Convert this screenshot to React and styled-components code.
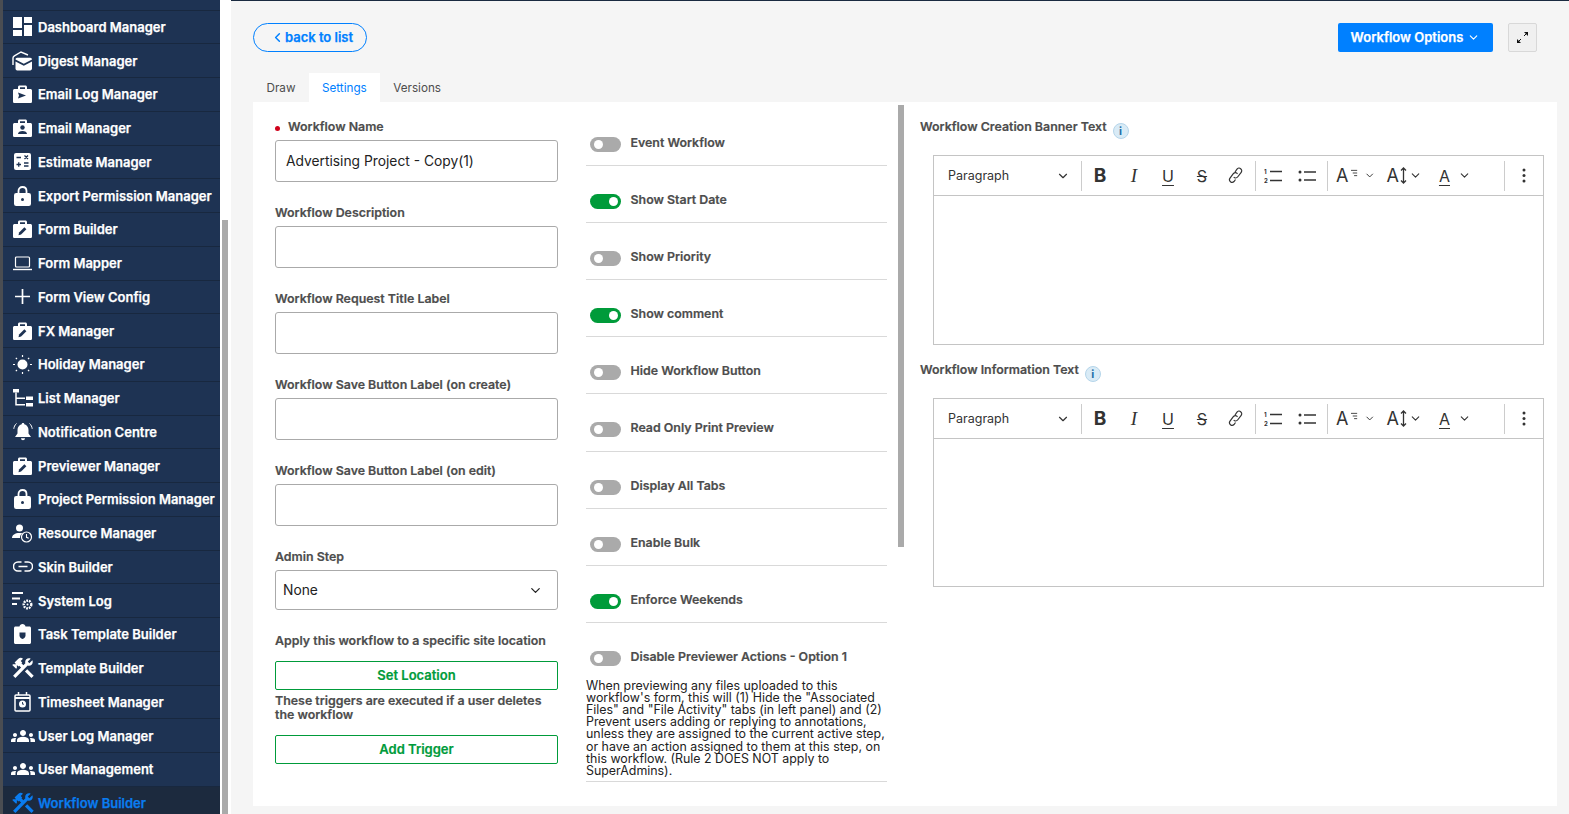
import React from 'react';
import styled, { createGlobalStyle } from 'styled-components';
import { MdConstruction, MdGroups } from 'react-icons/md';
import { FiChevronDown, FiChevronLeft } from 'react-icons/fi';

const NAVY = '#1e3353';

const GlobalStyle = createGlobalStyle`
  html, body {
    margin: 0;
    height: 100%;
    overflow: hidden;
    background: #f5f5f5;
  }
  body {
    font-family: Inter, 'Liberation Sans', sans-serif;
  }
  * {
    box-sizing: border-box;
  }
`;

const Page = styled.div`
  display: flex;
  width: 1569px;
  height: 814px;
  overflow: hidden;
`;

const Sidebar = styled.nav`
  width: 220px;
  flex: none;
  height: 814px;
  background: ${NAVY};
  border-left: 3px solid #4a4d52;
  overflow: hidden;
`;

const Sliver = styled.div`
  height: 10.5px;
  border-bottom: 1px solid #18283f;
`;

const Row = styled.div`
  display: flex;
  align-items: center;
  gap: 6px;
  height: 33.75px;
  padding-left: 10px;
  border-bottom: 1px solid #18283f;
  color: ${(p) => (p.$active ? '#0a7cf0' : '#fff')};
  background: ${(p) => (p.$active ? '#1c2a3e' : 'transparent')};
  box-shadow: ${(p) => (p.$active ? '-3px 0 0 #0a7cf0' : 'none')};
  font-size: 13px;
  font-weight: 600;
  -webkit-text-stroke: 0.25px currentColor;
  white-space: nowrap;
`;

const IconBox = styled.span`
  display: flex;
  width: 19px;
  height: 20px;
  flex: none;
  align-items: center;
  justify-content: center;
  svg {
    display: block;
    flex: none;
  }
`;

const SideRail = styled.div`
  width: 11px;
  flex: none;
  background: #fff;
  padding: 220px 2px 0;
`;

const RailThumb = styled.div`
  width: 6px;
  height: 594px;
  background: #aaa;
`;

const Main = styled.main`
  flex: 1;
  min-width: 0;
  height: 806px;
  padding: 0 12px 0 22px;
  display: flex;
  flex-direction: column;
`;

const Header = styled.header`
  display: flex;
  align-items: flex-start;
  height: 73px;
  margin: 0 -12px 0 -22px;
  padding: 22px 32px 0 22px;
  border-top: 1px solid #1a2a40;
`;

const BackButton = styled.button`
  display: flex;
  align-items: center;
  justify-content: center;
  width: 114px;
  height: 29px;
  padding: 0 0 1px 3px;
  border: 1px solid #0080ff;
  border-radius: 15px;
  background: transparent;
  color: #0080ff;
  font: 600 13px Inter, sans-serif;
  -webkit-text-stroke: 0.25px currentColor;
`;

const OptionsButton = styled.button`
  display: flex;
  align-items: center;
  justify-content: center;
  gap: 4px;
  width: 155px;
  height: 29px;
  margin-left: auto;
  padding: 0 0 1px;
  border: 0;
  border-radius: 2px;
  background: #0080ff;
  color: #fff;
  font: 600 13px Inter, sans-serif;
  -webkit-text-stroke: 0.25px currentColor;
`;

const ExpandButton = styled.button`
  display: flex;
  align-items: center;
  justify-content: center;
  width: 29px;
  height: 29px;
  margin-left: 15px;
  padding: 0;
  border: 1px solid #d8d8d8;
  border-radius: 2px;
  background: #f0f0f0;
`;

const Tabs = styled.div`
  display: flex;
  height: 29px;
`;

const Tab = styled.div`
  display: flex;
  align-items: center;
  padding: 0 ${(p) => (p.$active ? '13px' : '13.5px')};
  background: ${(p) => (p.$active ? '#fff' : 'transparent')};
  color: ${(p) => (p.$active ? '#0080ff' : '#4d4d4d')};
  font-size: 11.7px;
`;

const Panel = styled.section`
  flex: 1;
  display: flex;
  background: #fff;
  padding-left: 22px;
`;

const FormCol = styled.div`
  width: 283px;
  flex: none;
  padding-top: 17px;
`;

const Field = styled.div`
  margin-bottom: ${(p) => p.$mb ?? 23}px;
`;

const Label = styled.div`
  display: flex;
  align-items: center;
  height: 15px;
  margin-bottom: 6px;
  padding-top: 1px;
  color: #4d4d4d;
  font-size: 12.4px;
  font-weight: 600;
  -webkit-text-stroke: 0.2px currentColor;
  line-height: 14px;
  white-space: nowrap;
`;

const RequiredDot = styled.span`
  width: 5px;
  height: 5px;
  margin: 2px 8px 0 0;
  border-radius: 50%;
  background: #d0021b;
`;

const TextBox = styled.div`
  display: flex;
  align-items: center;
  justify-content: space-between;
  height: ${(p) => p.$h ?? 42}px;
  padding: 0 ${(p) => (p.$select ? '14px' : '11px')} 0 ${(p) => (p.$select ? '7px' : '10px')};
  border: 1px solid #aaa;
  border-radius: 3px;
  color: #222;
  font-size: 13.8px;
  line-height: 38px;
`;

const Hint = styled.div`
  height: 14px;
  margin-bottom: 13px;
  color: #4d4d4d;
  font-size: 12.4px;
  font-weight: 600;
  -webkit-text-stroke: 0.2px currentColor;
  line-height: 14px;
  white-space: nowrap;
`;

const GreenButton = styled.button`
  display: block;
  width: 100%;
  height: 29px;
  padding: 0 0 1px;
  border: 1px solid #009b3a;
  border-radius: 2px;
  background: #fff;
  color: #009b3a;
  font: 600 13px Inter, sans-serif;
  -webkit-text-stroke: 0.2px currentColor;
`;

const TriggerNote = styled.div`
  margin: 4px 0 13px;
  color: #4d4d4d;
  font-size: 12.4px;
  font-weight: 600;
  -webkit-text-stroke: 0.2px currentColor;
  line-height: 14px;
`;

const ToggleCol = styled.div`
  width: 301px;
  flex: none;
  margin-left: 28px;
  padding-top: 7px;
`;

const ToggleRow = styled.div`
  height: 57.1px;
  padding-top: 27px;
  border-bottom: 1px solid #d9d9d9;
`;

const LastRow = styled.div`
  padding-top: 27px;
  padding-bottom: 4px;
  border-bottom: 1px solid #d9d9d9;
`;

const ToggleLine = styled.div`
  display: flex;
  align-items: flex-start;
  padding-left: 4px;
  color: #4d4d4d;
  font-size: 12.4px;
  font-weight: 600;
  -webkit-text-stroke: 0.2px currentColor;
  line-height: 14px;
`;

const Track = styled.span`
  position: relative;
  width: 31px;
  height: 15px;
  flex: none;
  margin: 1px 9.5px 0 0;
  border-radius: 8px;
  background: ${(p) => (p.$on ? '#009b3a' : '#aaa')};
  &::after {
    content: '';
    position: absolute;
    top: 3px;
    left: ${(p) => (p.$on ? '19px' : '4px')};
    width: 9px;
    height: 9px;
    border-radius: 50%;
    background: #fff;
  }
`;

const Description = styled.div`
  margin-top: 14px;
  color: #222;
  font-size: 12.4px;
  line-height: 12.15px;
`;

const PanelThumb = styled.div`
  width: 6px;
  height: 442px;
  flex: none;
  margin: 3px 0 0 11px;
  background: #aaa;
`;

const EditorCol = styled.div`
  flex: 1;
  padding: 17px 0 0 16px;
`;

const EditorLabel = styled.div`
  display: flex;
  align-items: flex-start;
  height: 15px;
  margin-bottom: 21px;
  padding-top: 1px;
  color: #4d4d4d;
  font-size: 12.4px;
  font-weight: 600;
  -webkit-text-stroke: 0.2px currentColor;
  line-height: 14px;
`;

const InfoIcon = styled.span`
  display: flex;
  align-items: center;
  justify-content: center;
  width: 16px;
  height: 16px;
  margin: 3px 0 0 6px;
  border: 1px solid #b5d5ea;
  border-radius: 50%;
  background: #d9ebf6;
  color: #1d6fa8;
  font: 700 11px Inter, sans-serif;
  -webkit-text-stroke: 0;
`;

const Editor = styled.div`
  margin: 0 0 17px 13px;
  width: 611px;
  height: ${(p) => p.$h}px;
  border: 1px solid #c4c4c4;
  display: flex;
  flex-direction: column;
`;

const Toolbar = styled.div`
  display: flex;
  align-items: center;
  height: 40px;
  flex: none;
  border-bottom: 1px solid #c4c4c4;
  color: #333;
`;

const ParagraphPicker = styled.div`
  display: flex;
  align-items: center;
  justify-content: space-between;
  width: 147px;
  padding: 0 11px 0 14px;
  color: #333;
  font-size: 12.5px;
`;

const Sep = styled.span`
  width: 1px;
  height: 30px;
  flex: none;
  background: #ccc;
  margin-left: ${(p) => p.$ml ?? 0}px;
  margin-right: ${(p) => p.$mr ?? 0}px;
`;

const Tool = styled.span`
  display: flex;
  align-items: center;
  justify-content: center;
  width: ${(p) => p.$w ?? 34}px;
  height: 24px;
  flex: none;
  color: #333;
`;

const Glyph = styled.span`
  font-family: ${(p) => (p.$serif ? "'Liberation Serif', serif" : 'Inter, sans-serif')};
  font-size: ${(p) => p.$size ?? 17}px;
  font-weight: ${(p) => (p.$bold ? 700 : 400)};
  font-style: ${(p) => (p.$italic ? 'italic' : 'normal')};
  text-decoration: ${(p) => p.$line ?? 'none'};
  text-decoration-thickness: 1px;
  text-underline-offset: 3px;
`;

const DropTool = styled.span`
  display: flex;
  align-items: center;
  justify-content: flex-end;
  width: ${(p) => p.$w}px;
  gap: ${(p) => p.$gap ?? 4}px;
  flex: none;
  color: #333;
`;

const Spacer = styled.span`
  flex: 1;
`;

const FontLines = styled.svg`
  margin: 0 0 6px -3px;
`;

const LineArrows = styled.svg`
  margin-right: 1px;
`;

const icons = {
  dashboard: (
    <svg width="19" height="19" viewBox="0 0 19 19" fill="currentColor">
      <rect x="0" y="0" width="9" height="11" />
      <rect x="11" y="0" width="8" height="6" />
      <rect x="0" y="13" width="9" height="6" />
      <rect x="11" y="8" width="8" height="11" />
    </svg>
  ),
  digest: (
    <svg width="21" height="20" viewBox="0 0 21 20">
      <path d="M1 14V7c0-1 .5-1.600 1.400-2.200L9 1l7 3" fill="none" stroke="currentColor" strokeWidth="1.400" />
      <path d="M3.500 8.500c0-1 .7-1.700 1.700-1.700h13c1 0 1.800.7 1.800 1.700l-8.200 4.300-8.300-4.300zM3.500 10.600l8.300 4.200 8.200-4.200v7c0 1-.8 1.800-1.800 1.800h-13c-1 0-1.700-.8-1.700-1.800z" fill="currentColor" />
    </svg>
  ),
  send: (
    <svg width="19" height="18" viewBox="0 0 19 18">
      <path d="M5 4V2c0-1 .7-1.600 1.600-1.600h5.800c.9 0 1.600.6 1.600 1.600v2h3.400c.9 0 1.600.7 1.600 1.600v10.800c0 .9-.7 1.600-1.600 1.600H1.600c-.9 0-1.600-.7-1.600-1.600V5.600C0 4.700.7 4 1.600 4zM7 2.200V4h5V2.200z" fill="currentColor" fillRule="evenodd" />
      <path d="M5 7.500l8 3-8 3 1-3z" fill={NAVY} />
    </svg>
  ),
  person: (
    <svg width="19" height="18" viewBox="0 0 19 18">
      <path d="M5 4V2c0-1 .7-1.600 1.600-1.600h5.800c.9 0 1.600.6 1.600 1.600v2h3.400c.9 0 1.600.7 1.600 1.600v10.800c0 .9-.7 1.600-1.600 1.600H1.600c-.9 0-1.600-.7-1.600-1.600V5.600C0 4.700.7 4 1.600 4zM7 2.200V4h5V2.200z" fill="currentColor" fillRule="evenodd" />
      <circle cx="9.500" cy="8.500" r="2.200" fill={NAVY} />
      <path d="M5 15c0-2 2-3 4.500-3s4.500 1 4.500 3z" fill={NAVY} />
    </svg>
  ),
  calc: (
    <svg width="17" height="17" viewBox="0 0 17 17">
      <rect width="17" height="17" rx="2" fill="currentColor" />
      <path d="M2.500 4.500h4.500M2.500 11.500h4.500M4.750 9.300v4.400M10 10h4.500M10 13h4.500M10.500 2.500l3.500 3.500M14 2.500l-3.500 3.500" stroke={NAVY} strokeWidth="1.300" fill="none" />
    </svg>
  ),
  lock: (
    <svg width="17" height="20" viewBox="0 0 17 20">
      <path d="M4.500 8V5c0-2.400 1.700-4 4-4s4 1.600 4 4v3" fill="none" stroke="currentColor" strokeWidth="1.800" />
      <rect y="7" width="17" height="13" rx="2.200" fill="currentColor" />
      <circle cx="8.500" cy="13.500" r="1.500" fill={NAVY} />
    </svg>
  ),
  edit: (
    <svg width="19" height="18" viewBox="0 0 19 18">
      <path d="M5 4V2c0-1 .7-1.600 1.600-1.600h5.800c.9 0 1.600.6 1.600 1.600v2h3.400c.9 0 1.600.7 1.600 1.600v10.800c0 .9-.7 1.600-1.600 1.600H1.600c-.9 0-1.600-.7-1.600-1.600V5.600C0 4.700.7 4 1.600 4zM7 2.200V4h5V2.200z" fill="currentColor" fillRule="evenodd" />
      <path d="M5.500 15.200l.6-2.600 5.300-5.300 2 2-5.300 5.300z" fill={NAVY} />
    </svg>
  ),
  laptop: (
    <svg width="19" height="15" viewBox="0 0 19 15" fill="none" stroke="currentColor">
      <rect x="2.500" y="1" width="14" height="10" rx="1" strokeWidth="1.200" />
      <path d="M0 13.500h19" strokeWidth="1.400" />
    </svg>
  ),
  plus: (
    <svg width="15" height="15" viewBox="0 0 15 15" stroke="currentColor" strokeWidth="1.700">
      <path d="M7.500 0v15M0 7.500h15" />
    </svg>
  ),
  sun: (
    <svg width="19" height="19" viewBox="0 0 19 19" fill="currentColor">
      <circle cx="9.500" cy="9.500" r="5" />
      <path d="M9.500 0v2M9.500 17v2M0 9.500h2M17 9.500h2M2.800 2.800l1.200 1.200M15 15l1.200 1.200M2.800 16.200L4 15M15 4l1.200-1.200" stroke="currentColor" strokeWidth="1.200" />
    </svg>
  ),
  tree: (
    <svg width="20" height="18" viewBox="0 0 20 18" fill="currentColor">
      <rect x="0" y="0" width="6" height="3.500" />
      <rect x="13" y="7.500" width="7" height="3.500" />
      <rect x="13" y="14" width="7" height="3.500" />
      <path d="M3 3.500V15.800h9M3 9.300h9" fill="none" stroke="currentColor" strokeWidth="1.500" />
    </svg>
  ),
  bell: (
    <svg width="20" height="20" viewBox="0 0 20 20" fill="currentColor">
      <path d="M10 1c.8 0 1.300.5 1.300 1.200C14 3 15.500 5.300 15.500 8v3.500l2.500 3.500H2l2.500-3.500V8c0-2.700 1.500-5 4.200-5.800C8.700 1.500 9.200 1 10 1zM8 16.300h4c0 1.200-.9 2-2 2s-2-.8-2-2z" />
      <path d="M3.500 1.500C1.800 3 1 5 .8 6.800M16.500 1.500c1.700 1.500 2.500 3.500 2.700 5.300" fill="none" stroke="currentColor" strokeWidth="1" />
    </svg>
  ),
  resource: (
    <svg width="21" height="19" viewBox="0 0 21 19">
      <circle cx="7.500" cy="4" r="3.500" fill="currentColor" />
      <path d="M0 14c0-3 3-5 7.500-5 1 0 2 .1 2.800.3-1.500 1-2.300 2.800-2.300 4.700z" fill="currentColor" />
      <circle cx="14.500" cy="13" r="5" fill="none" stroke="currentColor" strokeWidth="1.200" />
      <path d="M14.500 10v3.300l2.200 1" fill="none" stroke="currentColor" strokeWidth="1.100" />
    </svg>
  ),
  link: (
    <svg width="20" height="11" viewBox="0 0 20 11" fill="none" stroke="currentColor" strokeWidth="1.500">
      <path d="M8.500 1H5a4.500 4.500 0 0 0 0 9h3.500M11.500 1H15a4.500 4.500 0 0 1 0 9h-3.500M5.500 5.500h9" />
    </svg>
  ),
  syslog: (
    <svg width="21" height="19" viewBox="0 0 21 19" fill="currentColor">
      <rect x="0" y="1" width="11" height="2" />
      <rect x="0" y="6.500" width="8" height="2" />
      <rect x="0" y="12" width="5" height="2" />
      <circle cx="15.500" cy="13.500" r="3.800" fill="none" stroke="currentColor" strokeWidth="2.400" strokeDasharray="1.800 .9" />
      <circle cx="15.500" cy="13.500" r="1" />
    </svg>
  ),
  task: (
    <svg width="17" height="20" viewBox="0 0 17 20">
      <path d="M1.500 2.500h4C5.700 1 7 0 8.500 0s2.800 1 3 2.500h4c.8 0 1.500.7 1.500 1.500v14.500c0 .8-.7 1.500-1.500 1.500h-14C.7 20 0 19.300 0 18.500V4c0-.8.7-1.500 1.500-1.500z" fill="currentColor" />
      <path d="M5.500 8.500h6v3c0 2-1.500 3-3 3.500-1.500-.5-3-1.500-3-3.500z" fill={NAVY} />
    </svg>
  ),
  calendar: (
    <svg width="17" height="20" viewBox="0 0 17 20" fill="none" stroke="currentColor">
      <rect x="1" y="3" width="15" height="16" rx="1" strokeWidth="1.500" />
      <path d="M1 6h15" strokeWidth="2" />
      <path d="M4.500 0v3M12.500 0v3" strokeWidth="1.500" />
      <circle cx="8.500" cy="12" r="3.500" fill="currentColor" stroke="none" />
      <path d="M8.500 10v2.200h1.500" stroke={NAVY} strokeWidth=".9" />
    </svg>
  ),
  tools: <MdConstruction size={26} />,
  group: <MdGroups size={24} />,
};

const menu = [
  ['dashboard', 'Dashboard Manager'],
  ['digest', 'Digest Manager'],
  ['send', 'Email Log Manager'],
  ['person', 'Email Manager'],
  ['calc', 'Estimate Manager'],
  ['lock', 'Export Permission Manager'],
  ['edit', 'Form Builder'],
  ['laptop', 'Form Mapper'],
  ['plus', 'Form View Config'],
  ['edit', 'FX Manager'],
  ['sun', 'Holiday Manager'],
  ['tree', 'List Manager'],
  ['bell', 'Notification Centre'],
  ['edit', 'Previewer Manager'],
  ['lock', 'Project Permission Manager'],
  ['resource', 'Resource Manager'],
  ['link', 'Skin Builder'],
  ['syslog', 'System Log'],
  ['task', 'Task Template Builder'],
  ['tools', 'Template Builder'],
  ['calendar', 'Timesheet Manager'],
  ['group', 'User Log Manager'],
  ['group', 'User Management'],
  ['tools', 'Workflow Builder', true],
];

const toggles = [
  ['Event Workflow', false],
  ['Show Start Date', true],
  ['Show Priority', false],
  ['Show comment', true],
  ['Hide Workflow Button', false],
  ['Read Only Print Preview', false],
  ['Display All Tabs', false],
  ['Enable Bulk', false],
  ['Enforce Weekends', true],
];

const textFields = [
  'Workflow Description',
  'Workflow Request Title Label',
  'Workflow Save Button Label (on create)',
  'Workflow Save Button Label (on edit)',
];

function OrderedListIcon() {
  return (
    <svg width="18" height="16" viewBox="0 0 18 16" fill="none" stroke="#333" strokeWidth="1.300">
      <text x="0" y="6" fontSize="6" fontWeight="700" fill="#333" stroke="none" fontFamily="Inter">1</text>
      <text x="0" y="15" fontSize="6" fontWeight="700" fill="#333" stroke="none" fontFamily="Inter">2</text>
      <path d="M6 3.500h12M6 12.500h12" />
    </svg>
  );
}

function BulletListIcon() {
  return (
    <svg width="18" height="14" viewBox="0 0 18 14" fill="#333">
      <circle cx="2" cy="3" r="1.500" />
      <circle cx="2" cy="11" r="1.500" />
      <path d="M6 3h12M6 11h12" stroke="#333" strokeWidth="1.300" />
    </svg>
  );
}

function EditorToolbar() {
  return (
    <Toolbar>
      <ParagraphPicker>
        Paragraph
        <FiChevronDown size={14} />
      </ParagraphPicker>
      <Sep $mr={1} />
      <Tool><Glyph $bold $size={19}>B</Glyph></Tool>
      <Tool><Glyph $serif $italic $size={19}>I</Glyph></Tool>
      <Tool><Glyph $line="underline" $size={16}>U</Glyph></Tool>
      <Tool><Glyph $line="line-through" $size={16}>S</Glyph></Tool>
      <Tool>
        <svg width="16" height="17" viewBox="0 0 16 17" fill="none" stroke="#333" strokeWidth="1.200">
          <path d="M6.500 12.500l-1.500 2a2.600 2.600 0 0 1-4-3.300l3.500-4.700a2.600 2.600 0 0 1 4 .3" transform="translate(1 0)" />
          <path d="M7 5l2-2.800a2.600 2.600 0 0 1 4.200 3.100L9.600 10a2.600 2.600 0 0 1-3.900.2" />
        </svg>
      </Tool>
      <Sep $ml={2} />
      <Tool><OrderedListIcon /></Tool>
      <Tool><BulletListIcon /></Tool>
      <Sep $ml={3} $mr={8} />
      <DropTool $w={39} $gap={6}>
        <Glyph $size={18}>A</Glyph>
        <FontLines width="7" height="8" viewBox="0 0 7 8" stroke="#333" strokeWidth="1">
          <path d="M0 1h7M2 4h5M3.500 7h3.500" />
        </FontLines>
        <FiChevronDown size={13} />
      </DropTool>
      <DropTool $w={47} $gap={1}>
        <Glyph $size={18}>A</Glyph>
        <LineArrows width="7" height="17" viewBox="0 0 7 17" fill="none" stroke="#333" strokeWidth="1.300">
          <path d="M3.500 1v15M1 3.500L3.500 1 6 3.500M1 13.500L3.500 16 6 13.500" />
        </LineArrows>
        <FiChevronDown size={13} />
      </DropTool>
      <DropTool $w={49} $gap={8}>
        <Glyph $line="underline" $size={16}>A</Glyph>
        <FiChevronDown size={13} />
      </DropTool>
      <Spacer />
      <Sep />
      <Tool $w={38}>
        <svg width="4" height="15" viewBox="0 0 4 15" fill="#333">
          <circle cx="2" cy="2" r="1.500" />
          <circle cx="2" cy="7.500" r="1.500" />
          <circle cx="2" cy="13" r="1.500" />
        </svg>
      </Tool>
    </Toolbar>
  );
}

export default function App() {
  return (
    <>
      <GlobalStyle />
      <Page>
        <Sidebar>
          <Sliver />
          {menu.map(([icon, label, active]) => (
            <Row key={label} $active={active}>
              <IconBox>{icons[icon]}</IconBox>
              {label}
            </Row>
          ))}
        </Sidebar>
        <SideRail>
          <RailThumb />
        </SideRail>
        <Main>
          <Header>
            <BackButton>
              <FiChevronLeft size={15} strokeWidth={2.4} />
              back to list
            </BackButton>
            <OptionsButton>
              Workflow Options
              <FiChevronDown size={13} />
            </OptionsButton>
            <ExpandButton>
              <svg width="11" height="11" viewBox="0 0 11 11" fill="#111" stroke="#111">
                <path d="M1.500 9.500L4 7" />
                <path d="M0 11V7l4 4z" stroke="none" />
                <path d="M9.500 1.500L7 4" />
                <path d="M11 0v4L7 0z" stroke="none" />
              </svg>
            </ExpandButton>
          </Header>
          <Tabs>
            <Tab>Draw</Tab>
            <Tab $active>Settings</Tab>
            <Tab>Versions</Tab>
          </Tabs>
          <Panel>
            <FormCol>
              <Field>
                <Label>
                  <RequiredDot />
                  Workflow Name
                </Label>
                <TextBox>Advertising Project - Copy(1)</TextBox>
              </Field>
              {textFields.map((label) => (
                <Field key={label}>
                  <Label>{label}</Label>
                  <TextBox />
                </Field>
              ))}
              <Field $mb={24}>
                <Label>Admin Step</Label>
                <TextBox $h={40} $select>
                  None
                  <FiChevronDown size={15} />
                </TextBox>
              </Field>
              <Hint>Apply this workflow to a specific site location</Hint>
              <GreenButton>Set Location</GreenButton>
              <TriggerNote>These triggers are executed if a user deletes the workflow</TriggerNote>
              <GreenButton>Add Trigger</GreenButton>
            </FormCol>
            <ToggleCol>
              {toggles.map(([label, on]) => (
                <ToggleRow key={label}>
                  <ToggleLine>
                    <Track $on={on} />
                    {label}
                  </ToggleLine>
                </ToggleRow>
              ))}
              <LastRow>
                <ToggleLine>
                  <Track />
                  Disable Previewer Actions - Option 1
                </ToggleLine>
                <Description>
                  When previewing any files uploaded to this workflow's form, this will (1) Hide the
                  "Associated Files" and "File Activity" tabs (in left panel) and (2) Prevent users
                  adding or replying to annotations, unless they are assigned to the current active
                  step, or have an action assigned to them at this step, on this workflow. (Rule 2
                  DOES NOT apply to SuperAdmins).
                </Description>
              </LastRow>
            </ToggleCol>
            <PanelThumb />
            <EditorCol>
              <EditorLabel>
                Workflow Creation Banner Text
                <InfoIcon>i</InfoIcon>
              </EditorLabel>
              <Editor $h={190}>
                <EditorToolbar />
              </Editor>
              <EditorLabel>
                Workflow Information Text
                <InfoIcon>i</InfoIcon>
              </EditorLabel>
              <Editor $h={189}>
                <EditorToolbar />
              </Editor>
            </EditorCol>
          </Panel>
        </Main>
      </Page>
    </>
  );
}
